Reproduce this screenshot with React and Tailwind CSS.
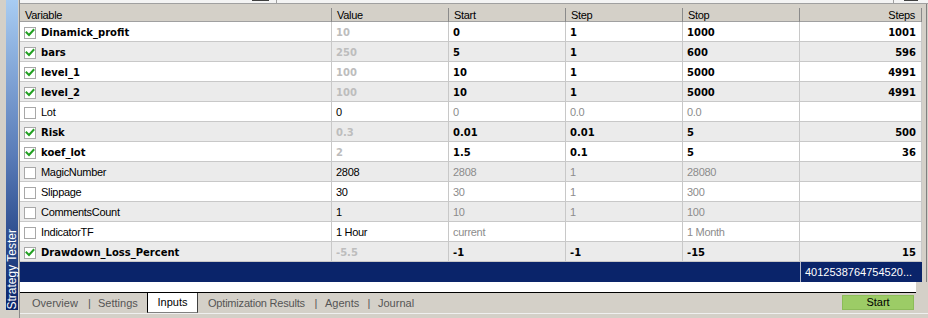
import React from "react";

const rows = [
  { name: "Dinamick_profit", checked: true, value: "10", start: "0", step: "1", stop: "1000", steps: "1001" },
  { name: "bars", checked: true, value: "250", start: "5", step: "1", stop: "600", steps: "596" },
  { name: "level_1", checked: true, value: "100", start: "10", step: "1", stop: "5000", steps: "4991" },
  { name: "level_2", checked: true, value: "100", start: "10", step: "1", stop: "5000", steps: "4991" },
  { name: "Lot", checked: false, value: "0", start: "0", step: "0.0", stop: "0.0", steps: "" },
  { name: "Risk", checked: true, value: "0.3", start: "0.01", step: "0.01", stop: "5", steps: "500" },
  { name: "koef_lot", checked: true, value: "2", start: "1.5", step: "0.1", stop: "5", steps: "36" },
  { name: "MagicNumber", checked: false, value: "2808", start: "2808", step: "1", stop: "28080", steps: "" },
  { name: "Slippage", checked: false, value: "30", start: "30", step: "1", stop: "300", steps: "" },
  { name: "CommentsCount", checked: false, value: "1", start: "10", step: "1", stop: "100", steps: "" },
  { name: "IndicatorTF", checked: false, value: "1 Hour", start: "current", step: "", stop: "1 Month", steps: "" },
  { name: "Drawdown_Loss_Percent", checked: true, value: "-5.5", start: "-1", step: "-1", stop: "-15", steps: "15" },
];

const REG = "font-['Liberation_Sans',Arial,sans-serif] text-[11px] tracking-[-0.3px]";
const BOLD = "font-['DejaVu_Sans',Verdana,sans-serif] font-bold text-[10px]";
const COLS = "grid grid-cols-[312px_117px_117px_117px_117px_122px]";

function CheckBox({ checked }) {
  return (
    <div className="w-[12px] h-[12px] border border-[#a8a8a8] bg-white flex items-center justify-center shrink-0">
      {checked && (
        <svg width="10" height="10" viewBox="0 0 10 10">
          <path d="M1.5 4.5 L4 7 L8.5 2" stroke="#22a022" strokeWidth="2" fill="none" strokeLinecap="square" />
        </svg>
      )}
    </div>
  );
}

function HeaderCell({ children, right }) {
  return (
    <div className="flex items-stretch h-full">
      <div className={`flex-1 flex items-center pt-[3px] ${right ? "justify-end pr-[6px]" : "pl-[5px]"} ${REG} text-black`}>
        {children}
      </div>
      <div className="w-px bg-[#8a8a8a] mt-[4px] mb-[1px]" />
    </div>
  );
}

export default function App() {
  return (
    <div className="w-[928px] h-[318px] bg-[#d4d0c8] flex overflow-hidden">
      {/* left sidebar */}
      <div className="w-[20px] h-full flex">
        <div className="w-[6px] bg-[#d4d0c8]" />
        <div className="w-[12px] h-[310px] bg-linear-to-b from-[#a8ccf2] via-[#5a7cb8] to-[#0a246a] flex flex-col justify-end items-center pb-[1px]">
          <span className="font-['Liberation_Sans',Arial,sans-serif] text-[12px] text-white [writing-mode:vertical-rl] rotate-180 leading-[12px] whitespace-nowrap">
            Strategy Tester
          </span>
        </div>
        <div className="w-[1px] bg-[#d4d0c8]" />
        <div className="w-[1px] bg-[#8a8a8a]" />
      </div>

      {/* main */}
      <div className="flex-1 flex flex-col">
        {/* top strip */}
        <div className="h-[4px] flex bg-[#f4f4f4] border-b border-[#a0a0a0]">
          <div className="w-[232px]" />
          <div className="w-[17px] h-[1px] bg-[#404040]" />
          <div className="w-[7px]" />
          <div className="w-px bg-[#a0a0a0]" />
          <div className="w-[616px]" />
          <div className="w-px bg-[#a0a0a0]" />
          <div className="w-[10px]" />
          <div className="w-[14px] h-[1px] bg-[#404040]" />
        </div>

        <div className="flex">
          <div className="w-[902px] flex flex-col">
            {/* header */}
            <div className={`${COLS} h-[18px] bg-[#d4d0c8] border-b border-[#a0a0a0]`}>
              <HeaderCell>Variable</HeaderCell>
              <HeaderCell>Value</HeaderCell>
              <HeaderCell>Start</HeaderCell>
              <HeaderCell>Step</HeaderCell>
              <HeaderCell>Stop</HeaderCell>
              <HeaderCell right>Steps</HeaderCell>
            </div>

            {rows.map((r, i) => {
              const bg = i % 2 === 0 ? "bg-white" : "bg-[#ebebeb]";
              const cell = "h-[20px] border-b border-r border-[#c8c8c8] flex items-center pt-[2px] pl-[4px] whitespace-nowrap overflow-hidden";
              const sub = r.checked ? `${BOLD} text-black` : `${REG} text-[#8c8c8c]`;
              return (
                <div key={r.name} className={`${COLS} ${bg}`}>
                  <div className={`${cell} pl-[3px] gap-[5px]`}>
                    <CheckBox checked={r.checked} />
                    <span className={r.checked ? `${BOLD} text-black` : `${REG} text-black`}>{r.name}</span>
                  </div>
                  <div className={cell}>
                    <span className={r.checked ? `${BOLD} text-[#bdbdbd]` : `${REG} text-black`}>{r.value}</span>
                  </div>
                  <div className={cell}><span className={sub}>{r.start}</span></div>
                  <div className={cell}><span className={sub}>{r.step}</span></div>
                  <div className={cell}><span className={sub}>{r.stop}</span></div>
                  <div className={`${cell} justify-end pr-[5px]`}>
                    <span className={`${BOLD} text-black`}>{r.steps}</span>
                  </div>
                </div>
              );
            })}

            {/* blue totals bar */}
            <div className={`${COLS} h-[20px] bg-[#0a246a]`}>
              <div />
              <div />
              <div />
              <div />
              <div />
              <div className="border-l border-[#b8bccc] flex items-center pt-[1px] pl-[4px]">
                <span className={`${REG} tracking-normal text-white`}>4012538764754520...</span>
              </div>
            </div>
          </div>
          <div className="flex-1 flex">
            <div className="w-[4px] bg-[#d4d0c8]" />
            <div className="w-px bg-[#808080]" />
            <div className="flex-1 bg-[#d4d0c8]" />
          </div>
        </div>

        {/* white gap */}
        <div className="h-[10px] w-[896px] bg-white" />
        <div className="h-px w-[896px] bg-black" />

        {/* tabs */}
        <div className="h-[20px] flex items-stretch">
          <div className={`flex items-stretch ${REG} tracking-normal text-[#555555]`}>
            <div className="w-[12px]" />
            <div className="w-[54px] flex items-center">Overview</div>
            <div className="w-[7px] flex items-center justify-center">|</div>
            <div className="w-[5px]" />
            <div className="w-[49px] flex items-center">Settings</div>
            <div className="w-[51px] bg-white border-l border-black border-r border-r-[#404040] border-b border-b-[#808080] flex items-center justify-center text-black">
              Inputs
            </div>
            <div className="w-[114px] flex items-center pl-[10px] tracking-[-0.2px]">Optimization Results</div>
            <div className="w-[8px] flex items-center justify-center">|</div>
            <div className="w-[46px] flex items-center pl-[5px]">Agents</div>
            <div className="w-[6px] flex items-center justify-center">|</div>
            <div className="w-[60px] flex items-center pl-[6px]">Journal</div>
          </div>
          <div className="flex-1" />
          <div className="w-[72px] h-[15px] mt-[2px] mr-[14px] bg-[#9ccc66] border border-[#8cbc58] flex items-center justify-center">
            <span className={`${REG} tracking-normal text-black`}>Start</span>
          </div>
        </div>
        <div className="flex-1 border-t border-[#f0f0f0] bg-[#d4d0c8]" />
      </div>
    </div>
  );
}
